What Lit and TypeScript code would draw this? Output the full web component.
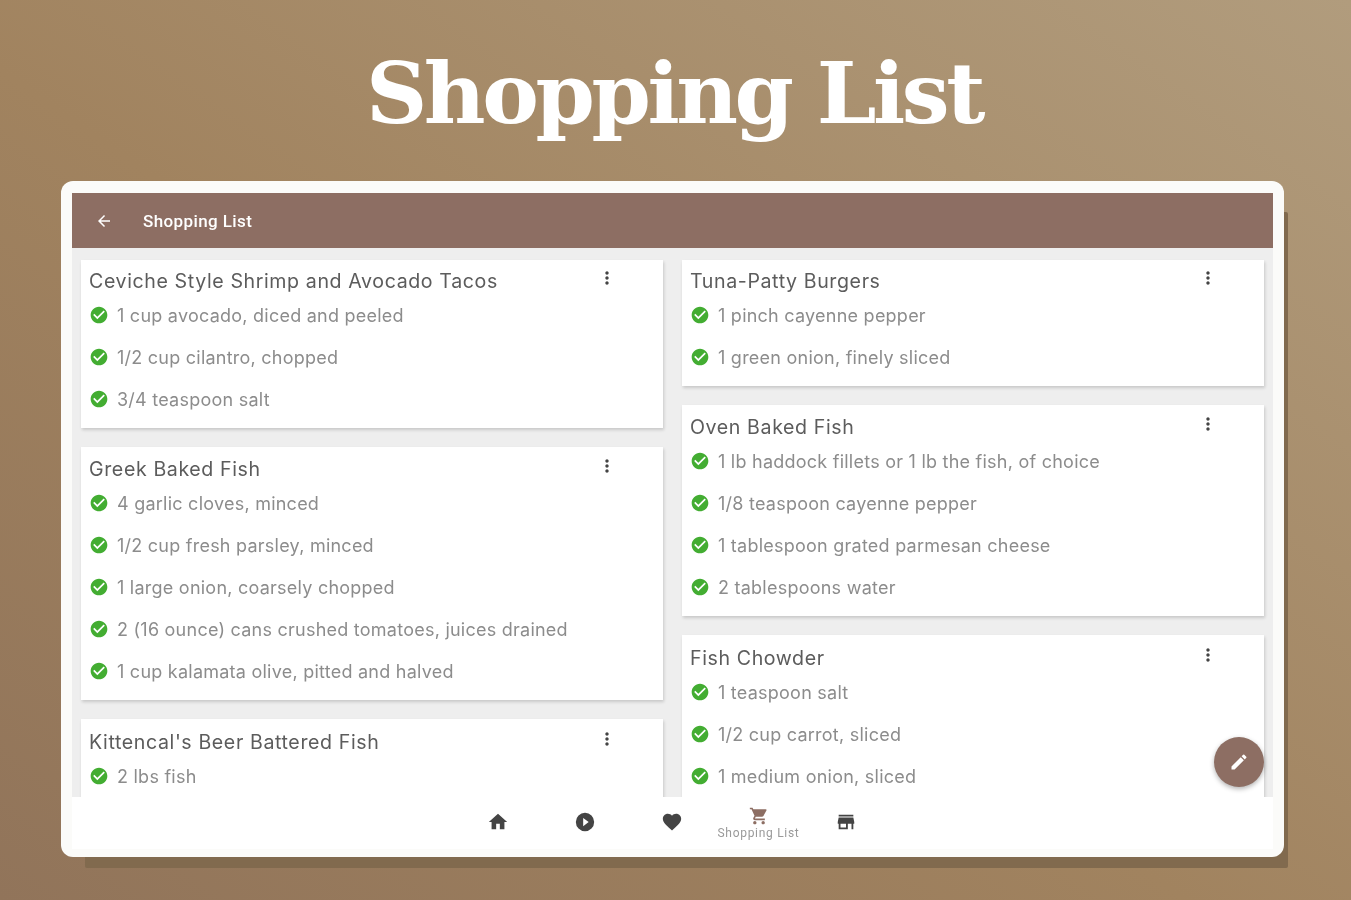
import { LitElement, html, css, svg } from 'lit';
import { customElement } from 'lit/decorators.js';

interface Recipe {
  title: string;
  items: string[];
}

const LEFT: Recipe[] = [
  {
    title: 'Ceviche Style Shrimp and Avocado Tacos',
    items: ['1 cup avocado, diced and peeled', '1/2 cup cilantro, chopped', '3/4 teaspoon salt'],
  },
  {
    title: 'Greek Baked Fish',
    items: [
      '4 garlic cloves, minced',
      '1/2 cup fresh parsley, minced',
      '1 large onion, coarsely chopped',
      '2 (16 ounce) cans crushed tomatoes, juices drained',
      '1 cup kalamata olive, pitted and halved',
    ],
  },
  { title: "Kittencal's Beer Battered Fish", items: ['2 lbs fish'] },
];

const RIGHT: Recipe[] = [
  { title: 'Tuna-Patty Burgers', items: ['1 pinch cayenne pepper', '1 green onion, finely sliced'] },
  {
    title: 'Oven Baked Fish',
    items: [
      '1 lb haddock fillets or 1 lb the fish, of choice',
      '1/8 teaspoon cayenne pepper',
      '1 tablespoon grated parmesan cheese',
      '2 tablespoons water',
    ],
  },
  {
    title: 'Fish Chowder',
    items: ['1 teaspoon salt', '1/2 cup carrot, sliced', '1 medium onion, sliced'],
  },
];

const icon = (d: unknown, size = 24) => html`
  <svg width=${size} height=${size} viewBox="0 0 24 24" fill="currentColor">${d}</svg>
`;

const CHECK = svg`<path d="M12 2C6.48 2 2 6.48 2 12s4.48 10 10 10 10-4.48 10-10S17.52 2 12 2zm-2 15-5-5 1.41-1.41L10 14.17l7.59-7.59L19 8l-9 9z"/>`;
const DOTS = svg`<path d="M12 8c1.1 0 2-.9 2-2s-.9-2-2-2-2 .9-2 2 .9 2 2 2zm0 2c-1.1 0-2 .9-2 2s.9 2 2 2 2-.9 2-2-.9-2-2-2zm0 6c-1.1 0-2 .9-2 2s.9 2 2 2 2-.9 2-2-.9-2-2-2z"/>`;
const BACK = svg`<path d="M20 11H7.83l5.59-5.59L12 4l-8 8 8 8 1.41-1.41L7.83 13H20v-2z"/>`;
const HOME = svg`<path d="M10 20v-6h4v6h5v-8h3L12 3 2 12h3v8z"/>`;
const PLAY = svg`<path fill-rule="evenodd" d="M12 2a10 10 0 1 0 0 20 10 10 0 0 0 0-20zm-2 14.5v-9l6 4.5-6 4.5z"/>`;
const HEART = svg`<path d="M12 21.35l-1.45-1.32C5.4 15.36 2 12.28 2 8.5 2 5.42 4.42 3 7.5 3c1.74 0 3.41.81 4.5 2.09C13.09 3.81 14.76 3 16.5 3 19.58 3 22 5.42 22 8.5c0 3.78-3.4 6.86-8.55 11.54L12 21.35z"/>`;
const CART = svg`<path d="M7 18c-1.1 0-1.99.9-1.99 2S5.9 22 7 22s2-.9 2-2-.9-2-2-2zM1 2v2h2l3.6 7.59-1.35 2.45c-.16.28-.25.61-.25.96 0 1.1.9 2 2 2h12v-2H7.42c-.14 0-.25-.11-.25-.25l.03-.12.9-1.63h7.45c.75 0 1.41-.41 1.75-1.03l3.58-6.49A1 1 0 0 0 20 4H5.21l-.94-2H1zm16 16c-1.1 0-1.99.9-1.99 2s.89 2 1.99 2 2-.9 2-2-.9-2-2-2z"/>`;
const STORE = svg`<path d="M20 4H4v2h16V4zm1 10v-2l-1-5H4l-1 5v2h1v6h10v-6h4v6h2v-6h1zm-9 4H6v-4h6v4z"/>`;
const EDIT = svg`<path d="M3 17.25V21h3.75L17.81 9.94l-3.75-3.75L3 17.25zM20.71 7.04a1 1 0 0 0 0-1.41l-2.34-2.34a1 1 0 0 0-1.41 0l-1.83 1.83 3.75 3.75 1.83-1.83z"/>`;

@customElement('app-root')
export class AppRoot extends LitElement {
  static styles = css`
    :host {
      display: block;
      height: 900px;
      overflow: hidden;
    }

    .page {
      height: 900px;
      box-sizing: border-box;
      padding: 0 67px 0 61px;
      background: linear-gradient(35deg, #91745a 0%, #a1835f 45%, #b19c7d 100%);
      display: flex;
      flex-direction: column;
    }

    .headline {
      height: 181px;
      margin: 0;
      display: flex;
      align-items: center;
      justify-content: center;
      padding: 4px 0 0 3px;
      box-sizing: border-box;
      font-family: 'DejaVu Serif', serif;
      font-weight: 700;
      font-size: 85px;
      letter-spacing: -3.45px;
      color: #fff;
      filter: blur(0.7px);
    }

    .frame {
      width: 1223px;
      height: 676px;
      box-sizing: border-box;
      padding: 12px 11px 8px;
      background: #fbfbf9;
      border-radius: 12px;
      box-shadow: 14px 21px 0 -10px #816a4e;
    }

    .app {
      position: relative;
      height: 100%;
      display: flex;
      flex-direction: column;
      overflow: hidden;
      background: #eeeeee;
      filter: blur(0.7px);
    }

    .topbar {
      flex: none;
      height: 55px;
      display: flex;
      align-items: center;
      gap: 30px;
      padding-left: 23px;
      background: #8d6e63;
      color: #fff;
      font-family: Roboto, sans-serif;
      font-size: 17px;
      font-weight: 500;
      letter-spacing: 0.4px;
    }

    .topbar svg {
      display: block;
    }

    .content {
      flex: 1;
      min-height: 0;
      overflow: hidden;
      display: grid;
      grid-template-columns: 582px 582px;
      gap: 19px;
      padding: 12px 9px 0;
      align-items: start;
    }

    .column {
      display: flex;
      flex-direction: column;
      gap: 19px;
    }

    .card {
      position: relative;
      box-sizing: border-box;
      padding: 8px;
      background: #fff;
      box-shadow: 1px 2px 3px rgba(0, 0, 0, 0.16);
      font-family: Inter, sans-serif;
    }

    .card:nth-child(2) {
      padding-top: 9px;
    }

    .card:nth-child(3) {
      padding-top: 10px;
    }

    .card-title {
      height: 26px;
      line-height: 26px;
      font-size: 19.6px;
      letter-spacing: 0.6px;
      color: #5c5c5c;
      white-space: nowrap;
    }

    .menu {
      position: absolute;
      top: 8px;
      left: 516px;
      color: #444;
      display: block;
    }

    .card:nth-child(2) .menu {
      top: 9px;
    }

    .card:nth-child(3) .menu {
      top: 10px;
    }

    .row {
      height: 42px;
      display: flex;
      align-items: center;
      gap: 8px;
      font-size: 18px;
      letter-spacing: 0.24px;
      color: #8c8c8c;
      white-space: nowrap;
    }

    .row svg {
      flex: none;
      color: #43ad32;
    }

    .navbar {
      flex: none;
      height: 52px;
      display: flex;
      justify-content: center;
      padding-right: 2px;
      background: #fff;
      color: #444;
      position: relative;
    }

    .nav-item {
      width: 87px;
      display: flex;
      flex-direction: column;
      align-items: center;
      justify-content: center;
      padding-bottom: 2px;
      box-sizing: border-box;
    }

    .nav-item.active {
      color: #8d6e63;
      padding-bottom: 0;
    }

    .nav-label {
      font-family: Roboto, sans-serif;
      font-size: 12px;
      letter-spacing: 0.7px;
      line-height: 14px;
      color: #9a9a9a;
      white-space: nowrap;
    }

    .fab {
      position: absolute;
      right: 9px;
      bottom: 62px;
      width: 50px;
      height: 50px;
      border-radius: 50%;
      background: #8d6e63;
      color: #fff;
      display: flex;
      align-items: center;
      justify-content: center;
      box-shadow: 0 2px 5px rgba(0, 0, 0, 0.3);
    }
  `;

  private renderCard(recipe: Recipe) {
    return html`
      <section class="card">
        <div class="card-title">${recipe.title}</div>
        <span class="menu">${icon(DOTS, 20)}</span>
        <div class="list">
          ${recipe.items.map(
            item => html`<div class="row">${icon(CHECK, 20)}<span>${item}</span></div>`
          )}
        </div>
      </section>
    `;
  }

  render() {
    return html`
      <div class="page">
        <h1 class="headline">Shopping List</h1>
        <div class="frame">
          <div class="app">
            <header class="topbar">
              ${icon(BACK, 18)}
              <span>Shopping List</span>
            </header>
            <div class="content">
              <div class="column">${LEFT.map(r => this.renderCard(r))}</div>
              <div class="column">${RIGHT.map(r => this.renderCard(r))}</div>
            </div>
            <nav class="navbar">
              <div class="nav-item">${icon(HOME, 22)}</div>
              <div class="nav-item">${icon(PLAY, 22)}</div>
              <div class="nav-item">${icon(HEART, 22)}</div>
              <div class="nav-item active">
                ${icon(CART, 20)}
                <span class="nav-label">Shopping List</span>
              </div>
              <div class="nav-item">${icon(STORE, 22)}</div>
            </nav>
            <div class="fab">${icon(EDIT, 20)}</div>
          </div>
        </div>
      </div>
    `;
  }
}

declare global {
  interface HTMLElementTagNameMap {
    'app-root': AppRoot;
  }
}
